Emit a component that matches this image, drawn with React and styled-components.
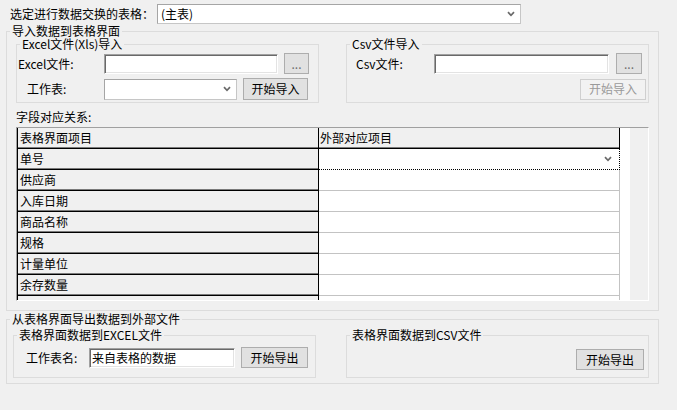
import React from 'react';
import styled, { createGlobalStyle, css } from 'styled-components';

const Global = createGlobalStyle`
  html, body { margin: 0; padding: 0; background: #f0f0f0; }
  body {
    font-family: "Noto Sans CJK SC", "Noto Sans", sans-serif;
    font-size: 12px;
    color: #000;
  }
  * { box-sizing: border-box; }
`;

const Page = styled.div`
  width: 677px;
  height: 410px;
  padding-top: 4px;
  background: #f0f0f0;
  overflow: hidden;
`;

const TopRow = styled.div`
  display: flex;
  align-items: center;
  height: 20px;
  padding-left: 10px;
`;

const Label = styled.span`
  flex: 0 0 ${(p) => p.$w}px;
  padding-left: ${(p) => p.$pl || 0}px;
  line-height: 14px;
  white-space: nowrap;
`;

const Combo = styled.div`
  flex: 0 0 ${(p) => p.$w}px;
  height: ${(p) => p.$h || 20}px;
  display: flex;
  align-items: center;
  justify-content: space-between;
  padding: 0 5px 0 3px;
  background: #fff;
  border: 1px solid;
  border-color: #a5a5a5 #c6c6c6 #c6c6c6 #a5a5a5;
  line-height: 14px;
`;

const TextBox = styled.input`
  flex: 0 0 ${(p) => p.$w}px;
  width: ${(p) => p.$w}px;
  height: 20px;
  margin: 0;
  padding: 0 1px 0 2px;
  font: inherit;
  line-height: 14px;
  color: #000;
  background: #fff;
  border: 1px solid;
  border-color: #a0a0a0 #ffffff #ffffff #a0a0a0;
  box-shadow: inset 1px 1px 0 #696969, inset -1px -1px 0 #e3e3e3;
  outline: none;
`;

const Btn = styled.button`
  flex: 0 0 ${(p) => p.$w}px;
  width: ${(p) => p.$w}px;
  height: ${(p) => p.$h || 21}px;
  margin: 0 0 0 ${(p) => p.$ml || 0}px;
  padding: 0;
  font: inherit;
  line-height: 14px;
  color: ${(p) => (p.$dots ? '#6e6e6e' : '#000')};
  background: #e1e1e1;
  border: 1px solid #adadad;
  &:disabled {
    background: #f2f2f2;
    border-color: #cfcfcf;
    color: #9a9a9a;
  }
`;

const Group = styled.fieldset`
  margin: ${(p) => p.$m || 0};
  padding: 0;
  min-width: 0;
  width: ${(p) => p.$w}px;
  border: 1px solid #dcdcdc;
`;

const Legend = styled.legend`
  margin-left: 3px;
  padding: 0 2px;
  font-size: 12px;
  line-height: ${(p) => p.$lh || 14}px;
  white-space: nowrap;
`;

const GroupBody = styled.div`
  padding: ${(p) => p.$p};
`;

const SubRow = styled.div`
  display: flex;
  align-items: stretch;
  gap: ${(p) => p.$gap}px;
`;

const FormRow = styled.div`
  display: flex;
  align-items: center;
  justify-content: ${(p) => (p.$end ? 'flex-end' : 'flex-start')};
  height: ${(p) => p.$h || 21}px;
  margin-top: ${(p) => p.$mt || 0}px;
  padding-right: ${(p) => p.$pr || 0}px;
`;

const FieldTitle = styled.div`
  margin-top: 7px;
  line-height: 14px;
  height: 14px;
`;

const GridFrame = styled.div`
  margin-top: 3px;
  height: 174px;
  display: flex;
  align-items: stretch;
  background: #f0f0f0;
  border: 1px solid;
  border-color: #a0a0a0 #ffffff #ffffff #a0a0a0;
  overflow: hidden;
`;

const GridTable = styled.div`
  display: grid;
  grid-template-columns: 302px 301px;
  grid-auto-rows: 21px;
  align-content: start;
  padding-right: 10px;
  background: #fff;
`;

const Cell = styled.div`
  display: flex;
  align-items: center;
  padding: 0 2px 0 ${(p) => (p.$first ? 2 : 1)}px;
  line-height: 14px;
  white-space: nowrap;
  overflow: hidden;
  ${(p) =>
    p.$fixed
      ? css`
          background: #f0f0f0;
          border-right: 1px solid #000;
          border-bottom: 1px solid #000;
          box-shadow: inset 0 -1px 0 #7a7a7a;
        `
      : css`
          background: #fff;
          border-right: 1px solid #c3c3c3;
          border-bottom: 1px solid #c3c3c3;
        `}
  ${(p) =>
    p.$first &&
    css`
      border-left: 1px solid #000;
    `}
  ${(p) =>
    p.$focus &&
    css`
      justify-content: flex-end;
      padding-right: 7px;
      border-right: 1px dotted #000;
      border-bottom: 1px dotted #000;
    `}
`;

const Arrow = () => (
  <svg width="8" height="6" viewBox="0 0 8 6">
    <path d="M1 1.2 L4 4.3 L7 1.2" fill="none" stroke="#6a6a6a" strokeWidth="1.7" />
  </svg>
);

const rows = ['单号', '供应商', '入库日期', '商品名称', '规格', '计量单位', '余存数量', ''];

export default function App() {
  return (
    <>
      <Global />
      <Page>
        <TopRow>
          <Label $w={147}>选定进行数据交换的表格：</Label>
          <Combo $w={364}>
            <span>(主表)</span>
            <Arrow />
          </Combo>
        </TopRow>

        <Group $w={653} $m="0 0 0 6px">
          <Legend>导入数据到表格界面</Legend>
          <GroupBody $p="0 9px 9px 9px">
            <SubRow $gap={27}>
              <Group $w={303}>
                <Legend $lh={12}>Excel文件(Xls)导入</Legend>
                <GroupBody $p="3px 0 2px 0">
                  <FormRow>
                    <Label $w={87} $pl={1}>Excel文件:</Label>
                    <TextBox $w={174} readOnly value="" />
                    <Btn $w={25} $ml={6} $dots>...</Btn>
                  </FormRow>
                  <FormRow $h={22} $mt={4}>
                    <Label $w={87} $pl={10}>工作表:</Label>
                    <Combo $w={133} $h={21}>
                      <span />
                      <Arrow />
                    </Combo>
                    <Btn $w={65} $h={22} $ml={6}>开始导入</Btn>
                  </FormRow>
                </GroupBody>
              </Group>
              <Group $w={303}>
                <Legend $lh={12}>Csv文件导入</Legend>
                <GroupBody $p="3px 0 2px 0">
                  <FormRow>
                    <Label $w={87} $pl={9}>Csv文件:</Label>
                    <TextBox $w={175} readOnly value="" />
                    <Btn $w={26} $ml={7} $dots>...</Btn>
                  </FormRow>
                  <FormRow $h={22} $mt={4} $end $pr={2}>
                    <Btn $w={66} disabled>开始导入</Btn>
                  </FormRow>
                </GroupBody>
              </Group>
            </SubRow>

            <FieldTitle>字段对应关系:</FieldTitle>
            <GridFrame>
              <GridTable>
                <Cell $fixed $first>表格界面项目</Cell>
                <Cell $fixed>外部对应项目</Cell>
                {rows.map((r, i) => (
                  <React.Fragment key={i}>
                    <Cell $fixed $first>{r}</Cell>
                    <Cell $focus={i === 0}>{i === 0 ? <Arrow /> : null}</Cell>
                  </React.Fragment>
                ))}
              </GridTable>
            </GridFrame>
          </GroupBody>
        </Group>

        <Group $w={653} $m="1px 0 0 6px">
          <Legend>从表格界面导出数据到外部文件</Legend>
          <GroupBody $p="3px 9px 5px 6px">
            <SubRow $gap={30}>
              <Group $w={303}>
                <Legend $lh={12}>表格界面数据到EXCEL文件</Legend>
                <GroupBody $p="6px 0 9px 0">
                  <FormRow>
                    <Label $w={75} $pl={12}>工作表名:</Label>
                    <TextBox $w={146} readOnly value="来自表格的数据" />
                    <Btn $w={67} $ml={6}>开始导出</Btn>
                  </FormRow>
                </GroupBody>
              </Group>
              <Group $w={303}>
                <Legend $lh={12}>表格界面数据到CSV文件</Legend>
                <GroupBody $p="8px 0 0 0">
                  <FormRow $end $pr={4}>
                    <Btn $w={68}>开始导出</Btn>
                  </FormRow>
                </GroupBody>
              </Group>
            </SubRow>
          </GroupBody>
        </Group>
      </Page>
    </>
  );
}
